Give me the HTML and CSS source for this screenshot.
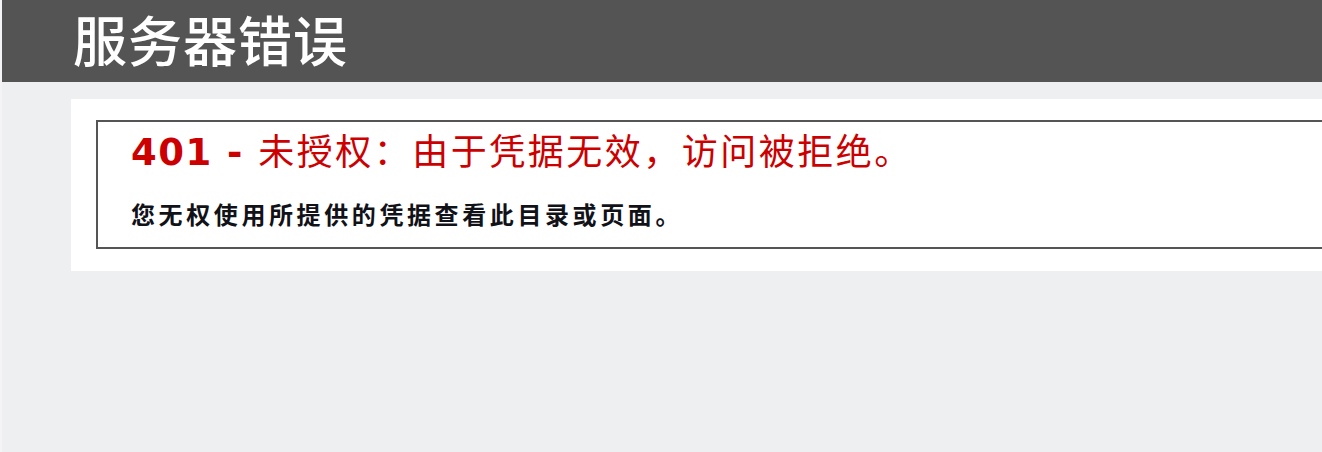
FILE: index.html
```html
<!DOCTYPE html>
<html lang="zh-CN">
<head>
<meta charset="utf-8">
<title>服务器错误</title>
<link rel="stylesheet" href="styles.css">
</head>
<body>
<div class="page">
  <div class="header"><h1 class="title">服务器错误</h1></div>
  <div class="content">
    <div class="panel">
      <div class="box">
        <h2 class="err"><span class="code">401 - </span>未授权：由于凭据无效，访问被拒绝。</h2>
        <h3 class="desc">您无权使用所提供的凭据查看此目录或页面。</h3>
      </div>
    </div>
  </div>
</div>
</body>
</html>
```
FILE: styles.css
```css
html, body {
  margin: 0;
  padding: 0;
  height: 100%;
  overflow: hidden;
}
body {
  background: #f4f4f6;
  font-family: "Noto Sans CJK SC", "DejaVu Sans", sans-serif;
}
.page {
  margin-left: 2px;
  min-height: 100%;
  background: #eeeff1;
}
.header {
  background: #545454;
  height: 82px;
  padding-left: 71px;
  box-sizing: border-box;
}
.title {
  margin: 0;
  color: #ffffff;
  font-family: "Noto Sans CJK SC", sans-serif;
  font-weight: 500;
  font-size: 54px;
  line-height: 78px;
  letter-spacing: 1px;
}
.content {
  padding-top: 17px;
  padding-left: 69px;
}
.panel {
  background: #ffffff;
  padding: 21px 0 22px 25px;
}
.box {
  border: 2px solid #555555;
  border-right: none;
  padding: 5px 0 18px 33px;
}
.err {
  margin: 0;
  color: #cc0000;
  font-family: "Noto Sans CJK SC", sans-serif;
  font-weight: 400;
  font-size: 36px;
  line-height: 44px;
  letter-spacing: 2.5px;
}
.code {
  font-family: "DejaVu Sans", "Noto Sans CJK SC", sans-serif;
  font-weight: 700;
  font-size: 37px;
  letter-spacing: 1.5px;
}
.desc {
  margin: 24px 0 0 0;
  color: #111118;
  font-family: "Noto Sans CJK SC", sans-serif;
  font-weight: 700;
  font-size: 24px;
  line-height: 30px;
  letter-spacing: 3.6px;
}
```
